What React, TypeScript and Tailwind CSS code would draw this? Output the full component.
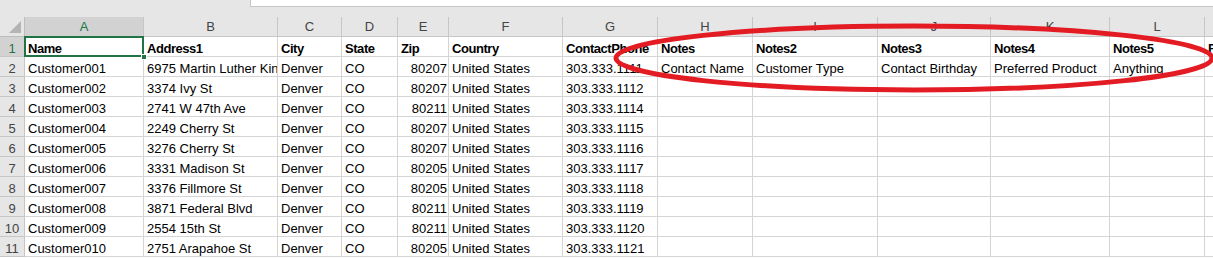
const cols = ['A', 'B', 'C', 'D', 'E', 'F', 'G', 'H', 'I', 'J', 'K', 'L', 'M']

// widths of the sheet columns incl. right gridline
const grid =
  'grid w-[1300px] grid-cols-[25px_119px_134px_64px_56px_51px_114px_95px_95px_125px_113px_119px_95px_95px]'

const header = ['Name', 'Address1', 'City', 'State', 'Zip', 'Country', 'ContactPhone', 'Notes', 'Notes2', 'Notes3', 'Notes4', 'Notes5', 'Fax']

const rows: string[][] = [
  ['Customer001', '6975 Martin Luther King Blvd', 'Denver', 'CO', '80207', 'United States', '303.333.1111', 'Contact Name', 'Customer Type', 'Contact Birthday', 'Preferred Product', 'Anything', ''],
  ['Customer002', '3374 Ivy St', 'Denver', 'CO', '80207', 'United States', '303.333.1112'],
  ['Customer003', '2741 W 47th Ave', 'Denver', 'CO', '80211', 'United States', '303.333.1114'],
  ['Customer004', '2249 Cherry St', 'Denver', 'CO', '80207', 'United States', '303.333.1115'],
  ['Customer005', '3276 Cherry St', 'Denver', 'CO', '80207', 'United States', '303.333.1116'],
  ['Customer006', '3331 Madison St', 'Denver', 'CO', '80205', 'United States', '303.333.1117'],
  ['Customer007', '3376 Fillmore St', 'Denver', 'CO', '80205', 'United States', '303.333.1118'],
  ['Customer008', '3871 Federal Blvd', 'Denver', 'CO', '80211', 'United States', '303.333.1119'],
  ['Customer009', '2554 15th St', 'Denver', 'CO', '80211', 'United States', '303.333.1120'],
  ['Customer010', '2751 Arapahoe St', 'Denver', 'CO', '80205', 'United States', '303.333.1121'],
]

function Cell({ text, bold, right }: { text: string; bold?: boolean; right?: boolean }) {
  return (
    <div
      className={`h-[20px] border-r border-b border-[#d4d4d4] flex items-end overflow-hidden whitespace-nowrap leading-[15px] pl-[3px] pr-[1px] ${
        right ? 'justify-end' : ''
      } ${bold ? 'font-bold tracking-[-0.45px]' : ''}`}
    >
      {text}
    </div>
  )
}

export default function App() {
  return (
    <div
      className="relative w-[1213px] h-[258px] overflow-hidden bg-white text-[13px] text-black"
      style={{ fontFamily: '"Liberation Sans", Arial, sans-serif' }}
    >
      {/* formula bar strip */}
      <div className="h-[17px] bg-[#e6e6e6] flex">
        <div className="ml-[250px] flex-1 h-[7px] bg-white border-l border-b border-[#c6c6c6]" />
      </div>

      {/* column letters */}
      <div className={`${grid} h-[20px] bg-[#e6e6e6] text-[#444]`}>
        <div className="border-r border-b border-[#bdbdbd] relative">
          <div className="absolute right-[3px] bottom-[3px] w-0 h-0 border-l-[12px] border-l-transparent border-b-[12px] border-b-[#b4b4b4]" />
        </div>
        {cols.map((c) => (
          <div
            key={c}
            className={`border-r border-b border-[#c6c6c6] flex items-center justify-center leading-none ${
              c === 'A' ? 'bg-[#d2d2d2] text-[#217346]' : ''
            }`}
          >
            {c}
          </div>
        ))}
      </div>

      {/* sheet */}
      {[header, ...rows].map((r, i) => (
        <div key={i} className={grid}>
          <div
            className={`h-[20px] border-r border-b border-[#c6c6c6] flex items-end justify-center leading-[15px] ${
              i === 0 ? 'bg-[#d2d2d2] text-[#217346]' : 'bg-[#e6e6e6] text-[#444]'
            }`}
          >
            {i + 1}
          </div>
          {cols.map((_, j) => (
            <Cell key={j} text={r[j] ?? ''} bold={i === 0} right={i > 0 && j === 4} />
          ))}
        </div>
      ))}

      {/* active cell A1 */}
      <div className="absolute left-[24px] top-[36px] w-[120px] h-[21px] border-2 border-[#217346] pointer-events-none" />
      <div className="absolute left-[141px] top-[54px] w-[6px] h-[6px] bg-[#217346] border border-white" />

      {/* red marker ellipse */}
      <svg className="absolute left-0 top-0 pointer-events-none" width="1213" height="258">
        <ellipse cx="914" cy="58" rx="298" ry="32" fill="none" stroke="#e31c24" strokeWidth="5" />
      </svg>
    </div>
  )
}
